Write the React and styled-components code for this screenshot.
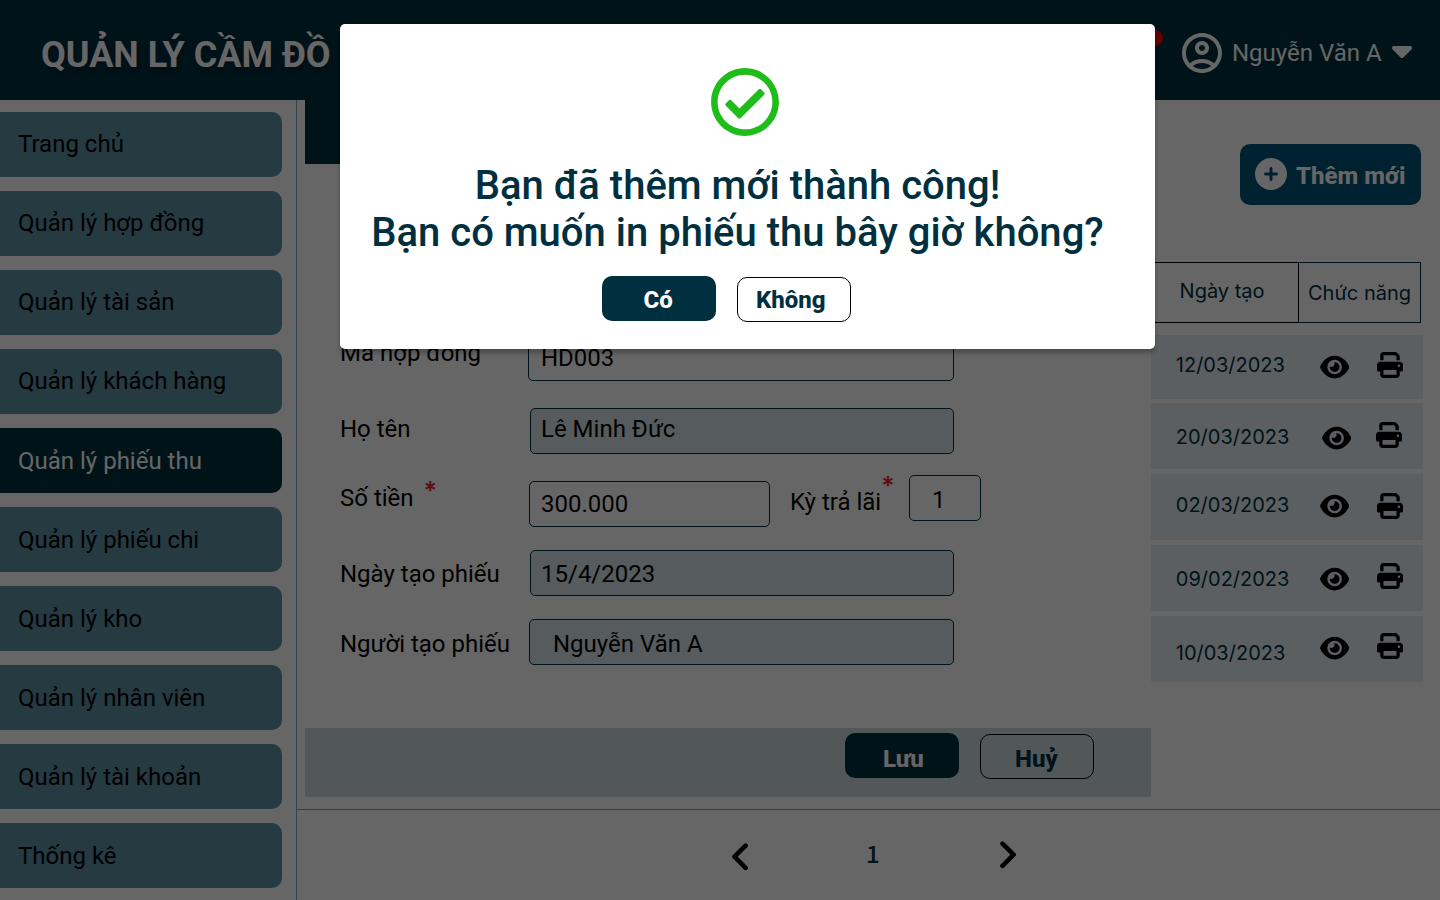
import React from 'react';
import styled, { createGlobalStyle } from 'styled-components';
import { MdOutlineAccountCircle } from 'react-icons/md';
import { FaRegCheckCircle } from 'react-icons/fa';
import { FaCaretDown, FaCirclePlus, FaEye, FaPrint } from 'react-icons/fa6';

const NAVY = '#00303f';

const GlobalStyle = createGlobalStyle`
  * { box-sizing: border-box; }
  body { margin: 0; background: #fff; overflow: hidden; }
  svg { display: block; flex: none; }
`;

const Screen = styled.div`
  position: relative;
  display: flex;
  flex-direction: column;
  width: 1440px;
  height: 900px;
  overflow: hidden;
  background: #fff;
  color: #000;
  font-family: Roboto, 'Liberation Sans', sans-serif;
  font-size: 24px;
  line-height: 28px;
  white-space: nowrap;
`;

const Header = styled.header`
  display: flex;
  justify-content: space-between;
  align-items: flex-start;
  flex: none;
  height: 100px;
  padding: 0 28px 0 41px;
  background: ${NAVY};
  color: #fff;
`;

const Title = styled.h1`
  margin: 34px 0 0;
  font-size: 36px;
  font-weight: 700;
  line-height: 42px;
  text-shadow: 0 4px 4px rgba(0, 0, 0, 0.25);
`;

const Account = styled.div`
  display: flex;
  align-items: flex-start;
`;

const Badge = styled.span`
  width: 16px;
  height: 16px;
  margin: 30px 15px 0 0;
  border-radius: 50%;
  background: #f50000;
`;

const AvatarIcon = styled(MdOutlineAccountCircle)`
  width: 48px;
  height: 48px;
  margin-top: 29px;
`;

const UserName = styled.span`
  width: 150px;
  margin: 39px 10px 0 6px;
`;

const Caret = styled(FaCaretDown)`
  width: 20px;
  height: 32px;
  margin-top: 34px;
`;

const Body = styled.div`
  display: flex;
  flex: 1;
  min-height: 0;
`;

const Sidebar = styled.nav`
  display: flex;
  flex-direction: column;
  gap: 14px;
  flex: none;
  width: 297px;
  padding-top: 12px;
  border-right: 1px solid #7fa9b9;
`;

const NavItem = styled.a`
  width: 282px;
  height: 65px;
  flex: none;
  padding: ${(p) => p.$pad}px 0 0 18px;
  border-radius: 0 10px 10px 0;
  background: ${(p) => (p.$active ? NAVY : '#5c91a4')};
  color: ${(p) => (p.$active ? '#fff' : '#000')};
`;

const Main = styled.main`
  display: flex;
  flex-direction: column;
  flex: 1;
`;

const Content = styled.div`
  display: flex;
  height: 709px;
  padding-left: 8px;
`;

const Panel = styled.section`
  display: flex;
  flex-direction: column;
  width: 846px;
  height: 697px;
`;

const PanelHeader = styled.div`
  height: 64px;
  background: ${NAVY};
`;

const Form = styled.div`
  flex: 1;
  padding: 171px 0 0 35px;
`;

const FormRow = styled.div`
  display: flex;
  align-items: flex-start;
  height: ${(p) => p.$height}px;
`;

const Label = styled.label`
  display: flex;
  width: ${(p) => p.$width}px;
  padding: ${(p) => p.$pad}px 0 0 ${(p) => p.$indent || 0}px;
`;

const Star = styled.span`
  color: #e8262c;
  font-family: Inter, sans-serif;
  font-size: 25px;
  font-weight: 600;
  line-height: 28px;
  margin: ${(p) => p.$margin};
`;

const Field = styled.div`
  width: ${(p) => p.$width}px;
  height: 46px;
  margin-top: ${(p) => p.$top || 0}px;
  padding: ${(p) => p.$pad};
  border: 1px solid ${NAVY};
  border-radius: 5px;
  background: ${(p) => (p.$disabled ? '#d7e4ea' : 'transparent')};
`;

const PanelFooter = styled.div`
  display: flex;
  align-items: flex-start;
  justify-content: flex-end;
  gap: 21px;
  height: 69px;
  padding: 5px 57px 0 0;
  background: #cdd9e2;
`;

const Button = styled.button`
  width: 114px;
  height: 45px;
  margin: ${(p) => (p.$primary ? 0 : 1)}px 0 0;
  padding: ${(p) => p.$pad};
  border: ${(p) => (p.$primary ? '0' : '1px solid #000')};
  border-radius: 10px;
  background: ${(p) => (p.$primary ? NAVY : 'transparent')};
  color: ${(p) => (p.$primary ? '#fff' : NAVY)};
  font: 800 24px/28px Roboto, 'Liberation Sans', sans-serif;
  display: flex;
  align-items: flex-start;
`;

const ListColumn = styled.section`
  display: flex;
  flex-direction: column;
  width: 289px;
  padding-top: 44px;
`;

const AddButton = styled.button`
  display: flex;
  align-items: flex-start;
  width: 181px;
  height: 61px;
  margin: 0 0 57px 89px;
  padding: 14px 0 0 15px;
  border: 0;
  border-radius: 10px;
  background: #005378;
  color: #fff;
  font: 800 24px/28px Roboto, 'Liberation Sans', sans-serif;

  span { margin: 4px 0 0 9px; }
`;

const TableHead = styled.div`
  display: flex;
  flex: none;
  height: 61px;
  margin-bottom: 12px;
  font-family: Inter, 'Liberation Sans', sans-serif;
  font-size: 20px;
  line-height: 24px;
  color: ${NAVY};
`;

const HeadCell = styled.div`
  width: ${(p) => p.$width}px;
  padding: ${(p) => p.$pad};
  border: 1px solid ${(p) => p.$line};
  border-left-width: 0;
`;

const Record = styled.div`
  display: flex;
  align-items: flex-start;
  flex: none;
  width: 272px;
  height: ${(p) => p.$height}px;
  margin-bottom: ${(p) => p.$gap}px;
  padding-left: 24.8px;
  background: #e4edf3;
`;

const DateText = styled.span`
  width: ${(p) => p.$width}px;
  margin-top: ${(p) => p.$top}px;
  color: ${NAVY};
  font-family: Inter, 'Liberation Sans', sans-serif;
  font-size: 20px;
  line-height: 24px;
`;

const ViewIcon = styled(FaEye)`
  width: 29.25px;
  height: 26px;
  margin-top: ${(p) => p.$top}px;
`;

const PrintIcon = styled(FaPrint)`
  width: 26px;
  height: 26px;
  margin: ${(p) => p.$top}px 0 0 ${(p) => p.$left}px;
`;

const Pagination = styled.footer`
  display: flex;
  align-items: flex-start;
  flex: 1;
  padding: 31px 0 0 435px;
  border-top: 1px solid #7fa0b0;
`;

const ChevronSvg = styled.svg`
  width: 16px;
  height: 28px;
  margin-top: ${(p) => p.$top}px;
  fill: none;
  stroke: #000;
  stroke-width: 4.6;
  stroke-linecap: round;
  stroke-linejoin: round;
`;

const PageNumber = styled.span`
  width: 134px;
  margin: -2px 0 0 118px;
  color: ${NAVY};
  font-family: 'Noto Sans CJK SC', sans-serif;
  font-weight: 500;
`;

const Backdrop = styled.div`
  position: absolute;
  inset: 0;
  display: flex;
  align-items: flex-start;
  padding: 24px 0 0 340px;
  background: rgba(0, 0, 0, 0.6);
`;

const Dialog = styled.div`
  display: flex;
  flex-direction: column;
  width: 815px;
  height: 325px;
  border-radius: 5px;
  background: #fff;
  box-shadow: 0 4px 4px rgba(0, 0, 0, 0.25);
`;

const SuccessIcon = styled(FaRegCheckCircle)`
  width: 70px;
  height: 70px;
  margin: 42.7px 0 0 370px;
  color: #1fbd1a;
`;

const Message = styled.p`
  width: 795px;
  margin: 25.3px 0 0;
  color: ${NAVY};
  font-size: 40px;
  font-weight: 500;
  line-height: 47px;
  text-align: center;
`;

const DialogActions = styled.div`
  display: flex;
  gap: 21px;
  margin: 20px 0 0 262px;
`;

const navItems = [
  'Trang chủ', 'Quản lý hợp đồng', 'Quản lý tài sản', 'Quản lý khách hàng', 'Quản lý phiếu thu',
  'Quản lý phiếu chi', 'Quản lý kho', 'Quản lý nhân viên', 'Quản lý tài khoản', 'Thống kê',
];

const records = [
  { date: '12/03/2023', height: 64, gap: 4, dateTop: 18, eyeTop: 19, printTop: 17, dateWidth: 144.2, printLeft: 28 },
  { date: '20/03/2023', height: 66, gap: 5, dateTop: 22, eyeTop: 22, printTop: 19, dateWidth: 146.2, printLeft: 25 },
  { date: '02/03/2023', height: 66, gap: 5, dateTop: 19, eyeTop: 19, printTop: 19, dateWidth: 144.2, printLeft: 28 },
  { date: '09/02/2023', height: 66, gap: 5, dateTop: 22, eyeTop: 21, printTop: 18, dateWidth: 144.2, printLeft: 28 },
  { date: '10/03/2023', height: 66, gap: 0, dateTop: 25, eyeTop: 19, printTop: 17, dateWidth: 144.2, printLeft: 28 },
];

export default function App() {
  return (
    <Screen>
      <GlobalStyle />
      <Header>
        <Title>QUẢN LÝ CẦM ĐỒ</Title>
        <Account>
          <Badge />
          <AvatarIcon />
          <UserName>Nguyễn Văn A</UserName>
          <Caret />
        </Account>
      </Header>
      <Body>
        <Sidebar>
          {navItems.map((name, i) => (
            <NavItem key={name} $active={i === 4} $pad={i < 4 ? 18 : 19}>{name}</NavItem>
          ))}
        </Sidebar>
        <Main>
          <Content>
            <Panel>
              <PanelHeader />
              <Form>
                <FormRow $height={73}>
                  <Label $width={188} $pad={4}>Mã hợp đồng</Label>
                  <Field $width={426} $pad="8px 0 0 12px">HD003</Field>
                </FormRow>
                <FormRow $height={67}>
                  <Label $width={190} $pad={7}>Họ tên</Label>
                  <Field $width={424} $pad="6px 0 0 10px" $disabled>Lê Minh Đức</Field>
                </FormRow>
                <FormRow $height={75}>
                  <Label $width={189} $pad={9}>Số tiền<Star $margin="-7px 0 0 10px">*</Star></Label>
                  <Field $width={241} $top={6} $pad="8px 0 0 11px">300.000</Field>
                  <Label $width={139} $pad={13} $indent={20}>
                    Kỳ trả lãi<Star $margin="-16px 0 0 0">*</Star>
                  </Label>
                  <Field $width={72} $pad="10px 0 0 22px">1</Field>
                </FormRow>
                <FormRow $height={69}>
                  <Label $width={190} $pad={10}>Ngày tạo phiếu</Label>
                  <Field $width={424} $pad="9px 0 0 10px" $disabled>15/4/2023</Field>
                </FormRow>
                <FormRow $height={46}>
                  <Label $width={189} $pad={11}>Người tạo phiếu</Label>
                  <Field $width={425} $pad="10px 0 0 23px" $disabled>Nguyễn Văn A</Field>
                </FormRow>
              </Form>
              <PanelFooter>
                <Button $primary $pad="12px 0 0 38px">Lưu</Button>
                <Button $pad="10px 0 0 34px">Huỷ</Button>
              </PanelFooter>
            </Panel>
            <ListColumn>
              <AddButton>
                <FaCirclePlus size={32} />
                <span>Thêm mới</span>
              </AddButton>
              <TableHead>
                <HeadCell $width={148} $line="#000" $pad="16px 0 0 28.6px">Ngày tạo</HeadCell>
                <HeadCell $width={122} $line={NAVY} $pad="18px 0 0 9px">Chức năng</HeadCell>
              </TableHead>
              {records.map((r) => (
                <Record key={r.date} $height={r.height} $gap={r.gap}>
                  <DateText $top={r.dateTop} $width={r.dateWidth}>{r.date}</DateText>
                  <ViewIcon $top={r.eyeTop} />
                  <PrintIcon $top={r.printTop} $left={r.printLeft} />
                </Record>
              ))}
            </ListColumn>
          </Content>
          <Pagination>
            <ChevronSvg $top={2} viewBox="0 0 16 28"><path d="M13.6 2.6 2.5 13.7l11.1 11.1" /></ChevronSvg>
            <PageNumber>1</PageNumber>
            <ChevronSvg $top={0} viewBox="0 0 16 28"><path d="M2.5 2.6l11.1 11.1L2.5 24.8" /></ChevronSvg>
          </Pagination>
        </Main>
      </Body>
      <Backdrop>
        <Dialog role="dialog">
          <SuccessIcon />
          <Message>Bạn đã thêm mới thành công!<br />Bạn có muốn in phiếu thu bây giờ không?</Message>
          <DialogActions>
            <Button $primary $pad="10px 0 0 41.5px">Có</Button>
            <Button $pad="8px 0 0 18px">Không</Button>
          </DialogActions>
        </Dialog>
      </Backdrop>
    </Screen>
  );
}
